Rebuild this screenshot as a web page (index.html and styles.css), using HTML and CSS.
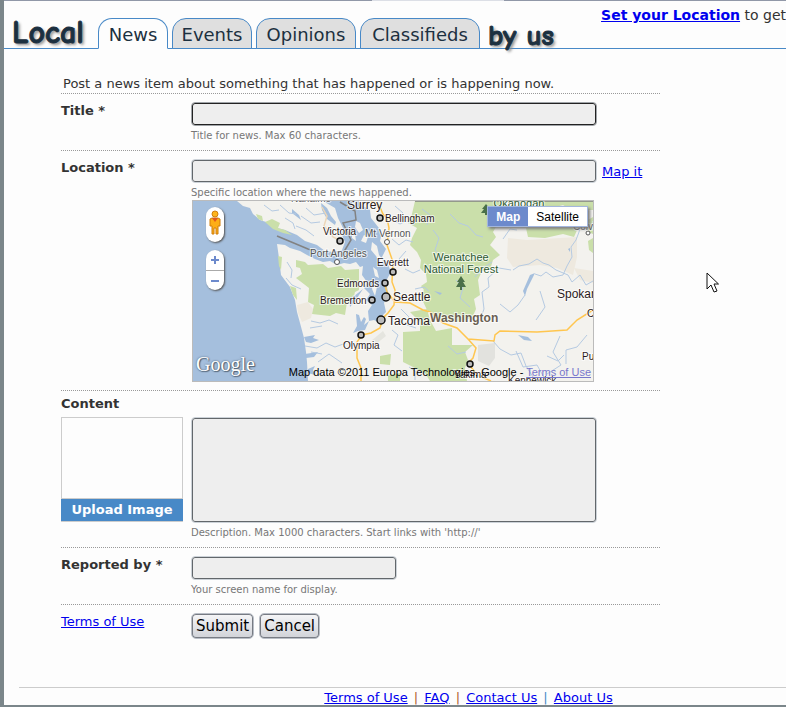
FILE: index.html
```
<!DOCTYPE html>
<html lang="en">
<head>
  <meta charset="UTF-8" />
  <meta name="viewport" content="width=device-width, initial-scale=1" />
  <title>Local News by us</title>
  <link rel="stylesheet" href="styles.css">
</head>
<body>
<div class="page">
  <div class="top-strip"></div>

  <header class="header">
    <span class="logo">Local</span>
    <nav class="tabs">
      <a href="#news" class="tab tab-news active">News</a>
      <a href="#events" class="tab tab-events">Events</a>
      <a href="#opinions" class="tab tab-opinions">Opinions</a>
      <a href="#classifieds" class="tab tab-classifieds">Classifieds</a>
    </nav>
    <span class="logo logo-end">by us</span>
    <p class="set-location"><a href="#location">Set your Location</a> to get</p>
  </header>

  <main>
    <form class="news-form">
      <p class="intro">Post a news item about something that has happened or is happening now.</p>

      <div class="row">
        <label class="label" for="title">Title *</label>
        <div class="field">
          <input type="text" id="title" class="box focused" maxlength="60" autofocus>
          <p class="hint">Title for news. Max 60 characters.</p>
        </div>
      </div>

      <div class="row row-location">
        <label class="label" for="location">Location *</label>
        <div class="field">
          <div class="with-link">
            <input type="text" id="location" class="box">
            <a href="#map">Map it</a>
          </div>
          <p class="hint">Specific location where the news happened.</p>

          <div class="map" id="map">
            <svg class="map-art" viewBox="0 0 400 180" preserveAspectRatio="xMinYMin slice">
              <rect width="400" height="180" fill="#a5bfdd"/>
              <!-- land -->
              <g fill="#f3f2ee">
                <path d="M44 0L50 5L57 7L60 13L67 19L76 22L84 27L92 29L104 34L112 40L124 44L132 50L140 51L149 49L152 41L149 34L150 27L145 17L142 7L130 0Z"/>
                <path d="M84 43L92 44L97 47L107 50L114 54L122 58L130 61L137 60L144 64L151 62L157 63L163 61L167 66L170 65L169 74L174 81L171 87L177 93L173 99L179 104L175 110L176 120L181 119L187 122L189 115L193 111L191 102L195 92L193 80L198 71L194 61L189 56L193 48L187 40L189 31L182 22L178 17L177 9L170 5L165 0H400V180H115L114 161L113 151L111 137L107 122L104 111L102 99L97 86L88 74L86 57Z"/>
                <path d="M179 41l5 4 2 9 4 5-2 5-5-9-5-6zM163 20l4 2 3 7-4 3-4-6zM171 34l4 2-2 6-5-2zM159 31l3 2 1 7-4-3zM180 66l4 3 2 8-4-2zM181 80l3 6-2 9-3-7zM157 3l5-2-1 6z"/>
              </g>
              <g fill="#eee9df">
                <path d="M104 104L115 101L120 108L118 117L109 121L105 112Z"/>
                <path d="M314 57L315 37L334 39L384 36L384 56L380 74L364 67L347 64L320 66Z"/>
                <path d="M381 67L400 70V82L387 79Z"/>
              </g>
              <!-- forests and parks -->
              <g fill="#cadfaa">
                <path d="M103 59L112 61L115 64L130 63L135 67L148 65L152 69L166 68V89L162 91L160 99L154 101L152 114L143 112L137 115L119 113L121 104L115 101L116 87L103 77L109 73L107 67L103 66Z"/>
                <path d="M222 0H312L310 7L314 17L304 24L300 31L303 36L297 44L307 54L300 59L297 69L289 70L285 79L287 94L281 98L283 108L279 117L264 121L247 119L234 109L227 94L231 89L228 85L234 81L233 73L227 67L228 59L224 51L217 44L219 37L224 27L215 22L218 17Z"/>
                <path d="M210 131L227 130V121L217 111L234 108L237 119L243 130L259 127V144H280L272 151L275 159L272 167L274 180H237L232 172L210 161Z"/>
                <path d="M333 27H385L381 36L370 33L352 37L335 36Z"/>
                <path d="M332 0H400V9H378L370 4L356 8L344 3Z"/>
                <path d="M79 18L87 22L85 27L92 29L99 34L90 32L80 28L72 21ZM63 13L69 15L70 20L65 18ZM187 155L198 153L197 164L187 163ZM195 174L207 172V180H195Z"/>
                <path d="M395 40L400 37V52L396 49ZM393 20L400 16V33L395 31Z"/>
                <path d="M85 55l4 1-1 13-2-4zM97 85l6 2 1 12-4-5z"/>
              </g>
              <path d="M285 144L302 142V157L296 165L285 160Z" fill="#e2e2de"/>
              <path d="M178 140L190 130L193 135L183 143Z" fill="#e5e5df"/>
              <!-- lakes, inlets and rivers -->
              <g fill="#a5bfdd">
                <path d="M111 136l11-2-2 3 6 2-8 3-5-1zM112 153l13-2-4 5-8 1zM115 168l7-3-2 4 2 5-7-2z"/>
                <path d="M163 113l3 1 2 7 3-5 2 2-2 6 5-4-4 9-7 1-5 2 4-7zM156 96l4 0 10-8-8 12-5 6z"/>
                <path d="M330 90L337 74L342 72L338 80L334 88L332 95ZM325 134L335 136L339 140L331 139ZM241 90l8 2-2 2zM375 48l2-1 0 4z"/>
                <path d="M128 2l6 5 4 8 5 6-1 3-8-6-5-9zM99 8l7 6 2 5-9-7z"/>
              </g>
              <g fill="none" stroke="#b5cae2">
                <path d="M342 73L348 75L353 71L360 76L370 74L374 65L379 56L378 46L383 39L386 31L388 23M320 69L326 65L336 63L344 58L350 62L356 64L363 69L375 74L379 81L387 74L393 84L400 80M318 69L306 67L295 77L296 86L289 91L291 108L287 119"/>
                <path d="M300 140L307 148L318 154L328 152L333 165L340 176M307 103L317 111L325 104L332 94M323 150L330 166L344 164L353 180M367 135L360 151L368 164L354 173M394 134L384 146L373 149L373 163"/>
                <path d="M118 120L127 122L136 119L145 123M117 127L129 125M112 145L124 147L133 142L142 146L153 142M125 161L136 153L149 162M118 151L129 153M94 61L99 69L98 77M93 77L99 84L108 88M208 108L216 116L214 124L223 127M199 129L205 134L201 144L209 150M200 19L207 23L213 20L222 24M202 5L210 12L207 20M199 38L206 44L213 39L220 41M213 50L206 58L212 66M212 68L220 72L227 69M222 88L231 86L236 90M257 13L266 22L275 25L283 34L290 36M240 29L246 37L242 49L250 58M229 8L237 14L234 24M255 145L264 153L273 151M216 166L222 170L222 179M263 79L270 87L267 97L277 106M299 61L289 68L282 76"/>
                <path d="M71 4L79 10L86 9M87 4L96 12L103 13M108 15L118 22L127 21M103 25L113 29L121 35M113 7L121 14L133 12M92 17L100 22L102 28M347 90L352 106L343 119M354 155L365 160L371 154M310 38L317 28L324 29"/>
              </g>
              <!-- borders -->
              <path d="M84 35L115 48L122 50M149 54L152 49L158 39L150 22L163 19L162 10L147 1M222 0H400" fill="none" stroke="#828282" stroke-width="1.500"/>
              <!-- highways -->
              <path d="M178 0L186 4L190 13L194 17L196 27L194 44L200 61L199 81L202 89L201 104L195 112L190 117L187 127L178 132L169 134L164 141V157L168 167V180M191 81L194 91L202 101L217 102L230 109L237 111L250 122L264 127L275 138L301 140L302 134L307 130L344 131L374 129L384 119L400 109M275 138L283 147L280 157L275 162L284 174L298 180" fill="none" stroke="#ffc64f" stroke-width="1.500"/>
              <path d="M129 6L134 15L131 25L140 36L146 39" fill="none" stroke="#ecd6b7" stroke-width="1.500"/>
              <g fill="#4a7049">
                <path d="M268 75l4 6h-2l3 5h-4v3h-2v-3h-4l3-5h-2zM293 3l4 5h-2l2 4h-3v2h-2v-2h-4l3-4h-2z"/>
              </g>
              <g class="city">
                <circle cx="187" cy="17" r="3"/><circle cx="147" cy="40" r="3"/>
                <circle cx="200" cy="71" r="3"/><circle cx="192" cy="82" r="3"/>
                <circle cx="179" cy="99" r="3"/><circle cx="193" cy="96" r="4"/>
                <circle cx="188" cy="119" r="4"/><circle cx="168" cy="134" r="3"/>
                <circle cx="277" cy="163" r="3"/>
              </g>
              <g class="town">
                <circle cx="194" cy="41" r="2.5"/><circle cx="144" cy="61" r="2.5"/><circle cx="395" cy="32" r="2"/>
              </g>
              <g class="place">
                <text x="192" y="21">Bellingham</text>
                <text x="130" y="34">Victoria</text>
                <text x="184" y="65">Everett</text>
                <text x="144" y="86">Edmonds</text>
                <text x="127" y="103">Bremerton</text>
                <text x="150" y="148">Olympia</text>
                <text x="261" y="177">Yakima</text>
                <text x="315" y="183">Kennewick</text>
                <text x="389" y="159">Pullman</text>
                <text x="394" y="116">Coeur</text>
              </g>
              <g class="place faint">
                <text x="172" y="36">Mt Vernon</text>
                <text x="117" y="56">Port Angeles</text>
                <text x="380" y="29">Colville</text>
                <text x="98" y="1">Nanaimo</text>
              </g>
              <g class="place large">
                <text x="154" y="8">Surrey</text>
                <text x="200" y="100">Seattle</text>
                <text x="195" y="124">Tacoma</text>
                <text x="364" y="97">Spokane</text>
              </g>
              <g class="forest">
                <text x="268" y="60">Wenatchee</text>
                <text x="268" y="72">National Forest</text>
                <text x="326" y="6">Okanogan</text>
              </g>
              <text class="state" x="237" y="121">Washington</text>
            </svg>

            <button type="button" class="pegman" aria-label="Street View">
              <svg width="14" height="26" viewBox="0 0 14 26">
                <path d="M4 8h6l2 1v7h-2v8H8v-6H6v6H4v-8H2V9z" fill="#fdae16" stroke="#d07f0c"/>
                <circle cx="7" cy="4" r="3" fill="#fdb51a" stroke="#d07f0c"/>
                <path d="M4 8h6l-3 4z" fill="#e2571c"/>
              </svg>
            </button>
            <div class="zoom">
              <button type="button" aria-label="Zoom in"><svg width="8" height="8"><path d="M0 4h8M4 0v8"/></svg></button>
              <button type="button" aria-label="Zoom out"><svg width="8" height="8"><path d="M0 4h8"/></svg></button>
            </div>
            <div class="map-type">
              <button type="button" class="selected">Map</button>
              <button type="button">Satellite</button>
            </div>
            <span class="map-brand">Google</span>
            <p class="map-credit">Map data ©2011 Europa Technologies, Google - <a href="#map-terms">Terms of Use</a></p>
          </div>
        </div>
      </div>

      <div class="row row-content">
        <div class="side">
          <label class="label" for="content">Content</label>
          <div class="upload">
            <div class="preview"></div>
            <button type="button">Upload Image</button>
          </div>
        </div>
        <div class="field">
          <textarea id="content" class="box" maxlength="1000"></textarea>
          <p class="hint">Description. Max 1000 characters. Start links with 'http://'</p>
        </div>
      </div>

      <div class="row">
        <label class="label" for="reporter">Reported by *</label>
        <div class="field">
          <input type="text" id="reporter" class="box short">
          <p class="hint">Your screen name for display.</p>
        </div>
      </div>

      <div class="row row-actions">
        <div class="label"><a href="#terms">Terms of Use</a></div>
        <div class="field">
          <button type="submit" class="btn">Submit</button>
          <button type="button" class="btn">Cancel</button>
        </div>
      </div>
    </form>
  </main>

  <footer class="footer">
    <a href="#terms">Terms of Use</a> <span class="warm">|</span>
    <a href="#faq">FAQ</a> <span class="warm">|</span>
    <a href="#contact">Contact Us</a> <span>|</span>
    <a href="#about">About Us</a>
  </footer>

  <svg class="pointer" width="14" height="22" viewBox="0 0 14 22">
    <path d="M1 1V17L5 13L8 20L11 19L8 12H12.500Z" fill="#fff" stroke="#111"/>
  </svg>
</div>
<script>
  // keep the caret in the first field when the page opens
  document.getElementById("title").focus();
</script>
</body>
</html>
```
FILE: styles.css
```
* {
  box-sizing: border-box;
}
body {
  margin: 0;
  background: #fdfdfd;
  color: #333;
  font-family: "DejaVu Sans", Verdana, sans-serif;
  font-size: 13px;
  line-height: 16px;
}
p {
  margin: 0;
}
a {
  color: #0000ee;
}
button {
  font-family: inherit;
  cursor: pointer;
}
.page {
  position: relative;
  display: flex;
  flex-direction: column;
  min-height: 100vh;
  overflow: hidden;
  border-left: 4px solid #7b868a;
  border-bottom: 2px solid #7b868a;
}
main {
  flex: 1;
}
.top-strip {
  height: 1px;
  background: linear-gradient(to right, #9198a8 47%, #dcdfe6 47%, #dcdfe6 64%, #9198a8 64%);
}

/* header */
.header {
  display: flex;
  align-items: flex-end;
  height: 48px;
  padding-left: 8px;
  border-bottom: 1px solid #4889c7;
  white-space: nowrap;
}
.logo {
  width: 86px;
  color: #1c3040;
  font-family: "Comic Sans MS", "Comic Neue", Lato, sans-serif;
  font-size: 32px;
  font-weight: 900;
  line-height: 30px;
  -webkit-text-stroke: 1px #1c3040;
  text-shadow: 2px 2px 3px #888;
}
.logo-end {
  width: auto;
  margin-left: 8px;
  font-size: 29px;
  line-height: 24px;
}
.tabs {
  display: flex;
  gap: 4px;
  margin-bottom: -1px;
}
.tab {
  height: 31px;
  border: 1px solid #4889c7;
  border-radius: 14px 14px 0 0;
  background: #dfdfdf;
  color: #1c3040;
  font-size: 18px;
  line-height: 32px;
  text-align: center;
  text-decoration: none;
}
.tab.active {
  border-bottom-color: #fdfdfd;
  background: #fdfdfd;
}
.tab-news {
  width: 70px;
}
.tab-events {
  width: 80px;
}
.tab-opinions {
  width: 100px;
}
.tab-classifieds {
  width: 120px;
}
.set-location {
  align-self: flex-start;
  margin-left: auto;
  padding-top: 6px;
  font-size: 14px;
}
.set-location a {
  font-weight: bold;
}

/* form */
.news-form {
  max-width: 656px;
  padding: 27px 0 0 57px;
}
.intro {
  padding: 0 0 1px 2px;
  border-bottom: 1px dotted #999;
}
.row {
  display: flex;
  padding: 8px 0 7px;
  border-bottom: 1px dotted #999;
}
.label {
  display: block;
  width: 130px;
  flex-shrink: 0;
  padding-top: 1px;
  font-weight: bold;
}
.field {
  flex: 1;
  min-width: 0;
}
.box {
  display: block;
  width: 406px;
  max-width: 100%;
  height: 24px;
  margin: 0;
  padding: 2px 3px;
  border: 1px solid #ccd2d8;
  border-radius: 4px;
  background: #eee;
  box-shadow: inset 0 0 0 1px #62676b;
  font-family: inherit;
  font-size: 14px;
  outline: none;
  resize: none;
}
.box.focused {
  border-color: #a0a4a8;
  box-shadow: inset 0 0 0 1px #222;
}
.box.short {
  width: 206px;
}
.with-link {
  display: flex;
  align-items: center;
  gap: 5px;
}
.with-link a {
  padding-top: 1px;
}
.hint {
  padding-top: 3px;
  color: #777;
  font-size: 10px;
  line-height: 14px;
}
.row-location {
  padding-bottom: 8px;
}
.row-content {
  padding-top: 4px;
}
.row-content .field {
  padding-top: 22px;
}
.row-content .side {
  width: 130px;
}
.row-content textarea {
  height: 106px;
}
.upload {
  width: 122px;
  margin-top: 5px;
  border-bottom: 1px solid #ccc;
}
.preview {
  height: 82px;
  border: 1px solid #ccc;
}
.upload button {
  display: block;
  width: 100%;
  height: 22px;
  padding: 0 0 2px;
  border: 0;
  background: #4889c7;
  color: #fff;
  font-size: 13px;
  font-weight: bold;
}
.row-actions {
  border-bottom: 0;
}
.row-actions .label {
  font-weight: normal;
}
.row-actions .field {
  display: flex;
  gap: 5px;
}
.btn {
  height: 26px;
  padding: 0 4px;
  border: 1px solid #b9bec6;
  border-radius: 5px;
  background: linear-gradient(#f6f6f8, #d0d2d8);
  box-shadow: inset 0 0 0 1px #777b83;
  color: #000;
  font-size: 15px;
}

/* map */
.map {
  position: relative;
  width: 402px;
  max-width: 100%;
  height: 182px;
  margin-left: 1px;
  overflow: hidden;
  border: 1px solid #bbb;
  font-family: "Liberation Sans", Arial, sans-serif;
}
.map-art {
  display: block;
  width: 400px;
  height: 180px;
}
.map-art text {
  paint-order: stroke;
  stroke: #fff;
  stroke-width: 2px;
  stroke-opacity: 0.7;
}
.city circle {
  fill: #bbb;
  stroke: #111;
  stroke-width: 1.5px;
}
.town circle {
  fill: #fff;
  stroke: #555;
}
.place {
  fill: #2b1b1b;
  font-size: 10px;
}
.place.faint {
  fill: #555;
}
.place.large {
  font-size: 12px;
}
.forest {
  fill: #2d5a32;
  font-size: 11px;
  text-anchor: middle;
}
.state {
  fill: #6a5f52;
  font-size: 12px;
  font-weight: bold;
}
.pegman,
.zoom {
  position: absolute;
  left: 13px;
  width: 18px;
  border: 0;
  border-radius: 9px;
  background: #fff;
  box-shadow: 1px 1px 2px #555;
}
.pegman {
  top: 6px;
  height: 35px;
  padding: 2px;
}
.zoom {
  top: 49px;
  height: 40px;
}
.zoom button {
  display: block;
  width: 100%;
  height: 20px;
  padding: 0;
  border: 0;
  background: none;
  line-height: 1;
}
.zoom button + button {
  border-top: 1px solid #aaa;
}
.zoom path {
  fill: none;
  stroke: #6d8acc;
  stroke-width: 2px;
}
.map-type {
  position: absolute;
  top: 5px;
  right: 5px;
  display: flex;
  height: 21px;
  border: 1px solid #a3b6dd;
  box-shadow: 2px 2px 3px #777;
}
.map-type button {
  padding: 0 8px;
  border: 0;
  background: #fff;
  color: #000;
  font-family: inherit;
  font-size: 12px;
}
.map-type .selected {
  background: #6d8acc;
  color: #fff;
  font-weight: bold;
}
.map-brand {
  position: absolute;
  bottom: 6px;
  left: 3px;
  color: #fff;
  font-family: "Liberation Serif", serif;
  font-size: 20px;
  line-height: 22px;
  text-shadow: 0 0 2px #456, 1px 1px 1px #567;
}
.map-credit {
  position: absolute;
  right: 2px;
  bottom: 1px;
  color: #000;
  font-size: 11px;
  white-space: nowrap;
}
.map-credit a {
  color: #7777cc;
}

/* footer */
.footer {
  margin-left: 15px;
  padding: 2px 0 0 132px;
  border-top: 1px solid #ccc;
  line-height: 15px;
  text-align: center;
}
.footer span {
  padding: 0 2px;
  color: #4889c7;
}
.footer .warm {
  color: #b06030;
}
.pointer {
  position: absolute;
  top: 272px;
  left: 702px;
}
```
